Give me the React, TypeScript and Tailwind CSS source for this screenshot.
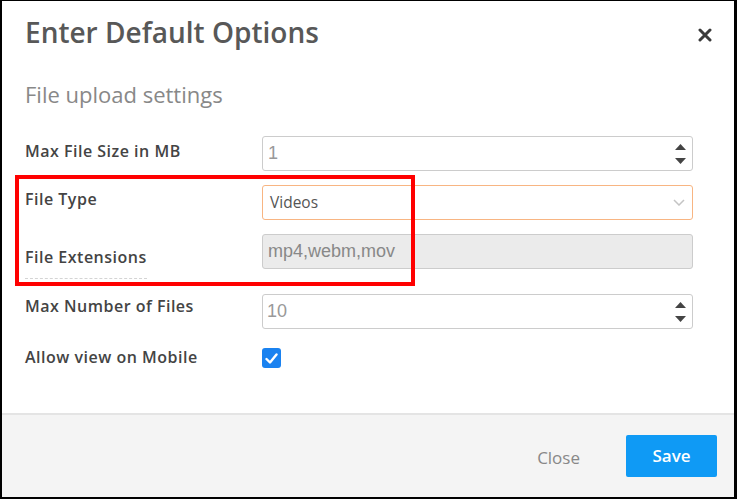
import React from "react";

const FONT = "font-['Open_Sans',sans-serif]";
const ARIAL = "font-['Liberation_Sans',Arial,sans-serif]";

function Spinner() {
  return (
    <div className="flex flex-col items-center gap-[8px] pr-[6px]">
      <svg width="11" height="6" viewBox="0 0 11 6">
        <path d="M0 6 L5.5 0 L11 6 Z" fill="#444" />
      </svg>
      <svg width="11" height="6" viewBox="0 0 11 6">
        <path d="M0 0 L11 0 L5.5 6 Z" fill="#444" />
      </svg>
    </div>
  );
}

function Row({
  label,
  children,
  labelPad = "pt-[3px]",
  dashed = false,
}: {
  label: string;
  children: React.ReactNode;
  labelPad?: string;
  dashed?: boolean;
}) {
  return (
    <div className="grid grid-cols-[237px_431px] items-start">
      <div className={labelPad}>
        <span
          className={
            "inline-block text-[16px] leading-[20px] tracking-[0.5px] font-semibold text-[#444] " +
            (dashed ? "border-b border-dashed border-[#d4d4d4] pb-[11px]" : "")
          }
        >
          {label}
        </span>
      </div>
      {children}
    </div>
  );
}

export default function App() {
  return (
    <div
      className={`${FONT} relative w-[737px] h-[499px] bg-white border-l-2 border-t border-r-[3px] border-b-2 border-black flex flex-col overflow-hidden`}
    >
      {/* Header */}
      <div className="flex items-start justify-between pl-[23px] pr-[22px] pt-[12px]">
        <h1 className="text-[28px] font-semibold text-[#585858] leading-[38px]">
          Enter Default Options
        </h1>
        <button className="mt-[15px]">
          <svg width="14" height="14" viewBox="0 0 14 14">
            <path
              d="M2 2 L12 12 M12 2 L2 12"
              stroke="#3a3a3a"
              strokeWidth="3"
              strokeLinecap="round"
            />
          </svg>
        </button>
      </div>

      {/* Body */}
      <div className="flex-1 pl-[23px]">
        <h2 className="mt-[29px] text-[22px] text-[#888] leading-[28px]">
          File upload settings
        </h2>

        <div className="mt-[28px] flex flex-col">
          <Row label="Max File Size in MB">
            <div className="flex h-[35px] items-center justify-between rounded-[3px] border border-[#ccc] bg-white">
              <span className={`${ARIAL} pl-[5px] text-[18px] text-[#999]`}>1</span>
              <Spinner />
            </div>
          </Row>

          <div className="mt-[14px]">
            <Row label="File Type" labelPad="pt-[2px]">
              <div className="flex h-[35px] items-center justify-between rounded-[3px] border border-[#f8b582] bg-white">
                <span className="pl-[7px] text-[15.5px] text-[#555]">Videos</span>
                <svg width="12" height="7" viewBox="0 0 12 7" className="mr-[7px]">
                  <path
                    d="M1 1 L6 6 L11 1"
                    fill="none"
                    stroke="#c4c4c4"
                    strokeWidth="1.5"
                  />
                </svg>
              </div>
            </Row>
          </div>

          <div className="mt-[14px]">
            <Row label="File Extensions" labelPad="pt-[11px]" dashed>
              <div className="flex h-[35px] items-center rounded-[3px] border border-[#ccc] bg-[#ebebeb]">
                <span className={`${ARIAL} pl-[5px] text-[18px] text-[#888]`}>
                  mp4,webm,mov
                </span>
              </div>
            </Row>
          </div>

          <div className="mt-[15px]">
            <Row label="Max Number of Files" labelPad="pt-[0px]">
              <div className="flex h-[35px] items-center justify-between rounded-[3px] border border-[#ccc] bg-white">
                <span className={`${ARIAL} pl-[4px] text-[18px] text-[#999]`}>10</span>
                <Spinner />
              </div>
            </Row>
          </div>

          <div className="mt-[19px]">
            <Row label="Allow view on Mobile" labelPad="-mt-[3px]">
              <div className="flex h-[20px] w-[19px] items-center justify-center rounded-[3px] bg-[#1a82f0]">
                <svg width="13" height="11" viewBox="0 0 13 11">
                  <path
                    d="M1.5 6 L5 9.5 L11.5 1.5"
                    fill="none"
                    stroke="white"
                    strokeWidth="2.4"
                    strokeLinecap="round"
                    strokeLinejoin="round"
                  />
                </svg>
              </div>
            </Row>
          </div>
        </div>
      </div>

      {/* Footer */}
      <div className="h-[84px] border-t-2 border-[#e4e4e4] bg-[#f4f4f4] flex items-center justify-end gap-[46px] pr-[17px]">
        <button className="text-[17px] text-[#888] mt-[4px]">Close</button>
        <button className="h-[42px] w-[91px] rounded-[2px] bg-[#0f9af5] text-[17px] font-semibold text-white">
          Save
        </button>
      </div>

      {/* annotation box */}
      <div className="pointer-events-none absolute left-[13px] top-[174px] h-[111px] w-[400px] border-4 border-[#ff0000]" />
    </div>
  );
}
